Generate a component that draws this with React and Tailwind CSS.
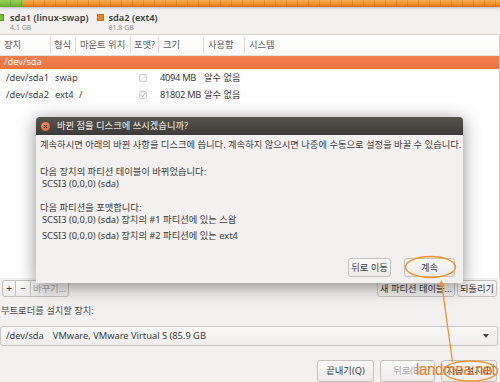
import React from 'react';

const FONT = { fontFamily: '"Noto Sans", "Noto Sans CJK KR", sans-serif' };

function Btn({ children, className = '', disabled }) {
    return (
        <div
            className={`flex items-center justify-center rounded-[3px] border border-[#c4c3c0] bg-[linear-gradient(#fafaf9,#ecebe9)] text-[9.3px] leading-none ${disabled ? 'text-[#aaa8a4]' : 'text-[#3c3c3c]'} ${className}`}
        >
            {children}
        </div>
    );
}

const COLS = 'grid grid-cols-[50px_25px_55px_28px_45px_41px_1fr]';

function Row({ dev, type, mount, checked, size }) {
    return (
        <div className={`${COLS} h-[17px] items-center text-[9.3px] text-[#3c3c3c]`}>
            <div className="pl-[6px]">{dev}</div>
            <div className="pl-[5px]">{type}</div>
            <div className="pl-[4px]">{mount}</div>
            <div className="flex pl-[9px]">
                <div className="flex h-[8px] w-[8px] items-center justify-center rounded-[2px] border border-[#cfcfcf] bg-[#f7f7f7]">
                    {checked && (
                        <svg width="6" height="6" viewBox="0 0 6 6">
                            <path d="M0.8 3.2 L2.4 4.8 L5.2 1.2" fill="none" stroke="#a9a9a9" strokeWidth="1" />
                        </svg>
                    )}
                </div>
            </div>
            <div className="pl-[2px] tracking-[-0.3px]">{size}</div>
            <div className="pl-[1px]">알수 없음</div>
            <div />
        </div>
    );
}

export default function App() {
    return (
        <div style={FONT} className="relative flex h-[382px] w-[500px] flex-col overflow-hidden whitespace-nowrap bg-[#f2f1f0]">
            {/* partition bar */}
            <div className="flex h-[7px] shadow-[0_1px_3px_rgba(0,0,0,0.25)]">
                <div className="w-[23px] bg-[linear-gradient(#9bd15a,#6aa92a)]">
                    <div className="h-full w-full bg-[repeating-linear-gradient(90deg,transparent_0_10px,rgba(0,0,0,0.12)_10px_11px)]" />
                </div>
                <div className="flex-1 bg-[linear-gradient(#f8ad55,#ee8a1f_70%,#d06d0e)]">
                    <div className="h-full w-full bg-[repeating-linear-gradient(90deg,transparent_0_10px,rgba(120,50,0,0.18)_10px_11px)]" />
                </div>
            </div>

            {/* legend */}
            <div className="mt-[6px] flex h-[21px]">
                <div className="ml-[-3px] flex">
                    <div className="mt-[1px] h-[7px] w-[7px] border border-[#5c9522] bg-[#7cbf35]" />
                    <div className="ml-[6px] flex flex-col">
                        <div className="text-[9.3px] leading-[10px] font-semibold text-[#3c3c3c]">sda1 (linux-swap)</div>
                        <div className="mt-[1px] text-[7px] leading-[8px] text-[#8d8d8d]">4.1 GB</div>
                    </div>
                </div>
                <div className="ml-[9px] flex">
                    <div className="mt-[1px] h-[7px] w-[7px] border border-[#c86d13] bg-[#f0861f]" />
                    <div className="ml-[4px] flex flex-col">
                        <div className="text-[9.3px] leading-[10px] font-semibold text-[#3c3c3c]">sda2 (ext4)</div>
                        <div className="mt-[1px] text-[7px] leading-[8px] text-[#8d8d8d]">81.8 GB</div>
                    </div>
                </div>
            </div>

            {/* partition table */}
            <div className="h-[246px] border-t border-r border-[#d3d2cf] bg-white">
                <div className={`${COLS} h-[21px] items-center border-b border-[#e2e1de] bg-[linear-gradient(#ffffff,#f7f7f6)] text-[9.3px] text-[#5b5b5b]`}>
                    <div className="pl-[4px]">장치</div>
                    <div className="flex h-[16px] items-center border-l border-[#dedddb] pl-[3px]">형식</div>
                    <div className="flex h-[16px] items-center border-l border-[#dedddb] pl-[4px]">마운트 위치</div>
                    <div className="flex h-[16px] items-center border-l border-[#dedddb] pl-[3px]">포맷?</div>
                    <div className="flex h-[16px] items-center border-l border-[#dedddb] pl-[4px]">크기</div>
                    <div className="flex h-[16px] items-center border-l border-[#dedddb] pl-[4px]">사용함</div>
                    <div className="flex h-[16px] items-center border-l border-[#dedddb] pl-[4px]">시스템</div>
                </div>
                <div className="flex h-[13px] items-center bg-[linear-gradient(#f0804e,#ec7440)] pl-[4px] text-[9.3px] text-white">
                    /dev/sda
                </div>
                <div className="pt-[1px]">
                    <Row dev="/dev/sda1" type="swap" mount="" size="4094 MB" />
                    <Row dev="/dev/sda2" type="ext4" mount="/" checked size="81802 MB" />
                </div>
            </div>

            {/* table toolbar */}
            <div className="mt-[2px] flex h-[18px] items-stretch">
                <div className="ml-[2px] flex">
                    <Btn className="w-[14px] rounded-r-none text-[10px]">+</Btn>
                    <Btn className="w-[15px] rounded-none border-l-0 text-[10px]">−</Btn>
                    <Btn disabled className="w-[38px] rounded-l-none border-l-0">바꾸기...</Btn>
                </div>
                <div className="ml-auto mr-[3px] flex gap-[2px]">
                    <Btn className="w-[78px] overflow-hidden">새 파티션 테이블...</Btn>
                    <Btn className="w-[40px]">되돌리기</Btn>
                </div>
            </div>

            {/* boot loader */}
            <div className="mt-[8px] pl-[1px] text-[9.3px] leading-[12px] text-[#4a4a4a]">부트로더를 설치할 장치:</div>
            <div className="mt-[9px] flex h-[20px] w-[498px] items-center rounded-[3px] border border-[#c8c7c4] bg-[linear-gradient(#f9f9f8,#efeeec)] pl-[5px] pr-[8px] text-[9.3px] text-[#3c3c3c]">
                <span>/dev/sda</span>
                <span className="ml-[9px]">VMware, VMware Virtual S (85.9 GB</span>
                <svg className="ml-auto" width="6" height="4" viewBox="0 0 6 4">
                    <path d="M0 0 H6 L3 4 Z" fill="#4a4a4a" />
                </svg>
            </div>

            {/* bottom buttons */}
            <div className="mt-[14px] flex h-[22px] justify-end gap-[6px] pr-[3px]">
                <Btn className="w-[57px]">끝내기(Q)</Btn>
                <Btn disabled className="w-[55px]">뒤로(B)</Btn>
                <Btn className="w-[56px]">지금 설치(I)</Btn>
            </div>

            {/* dialog */}
            <div className="absolute left-[36px] top-[117px] flex h-[166px] w-[427px] flex-col rounded-t-[4px] bg-[#f2f1f0] shadow-[0_3px_18px_rgba(0,0,0,0.45)]">
                <div className="flex h-[18px] items-center rounded-t-[4px] bg-[linear-gradient(#56554f,#3c3b37)]">
                    <div className="ml-[5px] flex h-[9px] w-[9px] items-center justify-center rounded-full bg-[radial-gradient(circle_at_40%_35%,#f79069,#dd5520)]">
                        <svg width="5" height="5" viewBox="0 0 5 5">
                            <path d="M1 1 L4 4 M4 1 L1 4" stroke="#3b2a20" strokeWidth="1" />
                        </svg>
                    </div>
                    <div className="ml-[7px] text-[9.3px] font-medium text-[#dfdbd2]">바뀐 점을 디스크에 쓰시겠습니까?</div>
                </div>
                <div className="flex flex-1 flex-col px-[4px] text-[9.3px] leading-[12px] text-[#3c3c3c]">
                    <div className="mt-[4px]">계속하시면 아래의 바뀐 사항을 디스크에 씁니다. 계속하지 않으시면 나중에 수동으로 설정을 바꿀 수 있습니다.</div>
                    <div className="mt-[15px]">다음 장치의 파티션 테이블이 바뀌었습니다:</div>
                    <div className="pl-[2px]">SCSI3 (0,0,0) (sda)</div>
                    <div className="mt-[12px]">다음 파티션을 포맷합니다:</div>
                    <div className="pl-[2px]">SCSI3 (0,0,0) (sda) 장치의 #1 파티션에 있는 스왑</div>
                    <div className="mt-[4px] pl-[2px]">SCSI3 (0,0,0) (sda) 장치의 #2 파티션에 있는 ext4</div>
                    <div className="mt-auto mb-[6px] flex justify-end gap-[13px] pr-[4px]">
                        <Btn className="h-[19px] w-[43px]">뒤로 이동</Btn>
                        <Btn className="h-[19px] w-[51px]">계속</Btn>
                    </div>
                </div>
            </div>

            {/* annotation overlay */}
            <svg className="pointer-events-none absolute left-0 top-0" width="500" height="382" viewBox="0 0 500 382">
                <ellipse cx="430.5" cy="267" rx="25" ry="10.5" fill="none" stroke="#f4902a" strokeWidth="1.4" />
                <line x1="441.5" y1="282" x2="452.5" y2="362" stroke="#f4902a" strokeWidth="1.3" />
                <path d="M441.3 280 L438.4 286.5 L444.4 285.7 Z" fill="#f4902a" />
                <ellipse cx="470.5" cy="371" rx="27" ry="10" fill="none" stroke="#f4902a" strokeWidth="1.4" />
            </svg>
            <div
                style={{ fontFamily: '"Liberation Sans", sans-serif' }}
                className="pointer-events-none absolute left-[416px] top-[362px] origin-bottom-left scale-y-[1.15] text-[15px] leading-[18px] tracking-[-0.3px] text-[#f07a1e]"
            >
                landmoa.net
            </div>
        </div>
    );
}
